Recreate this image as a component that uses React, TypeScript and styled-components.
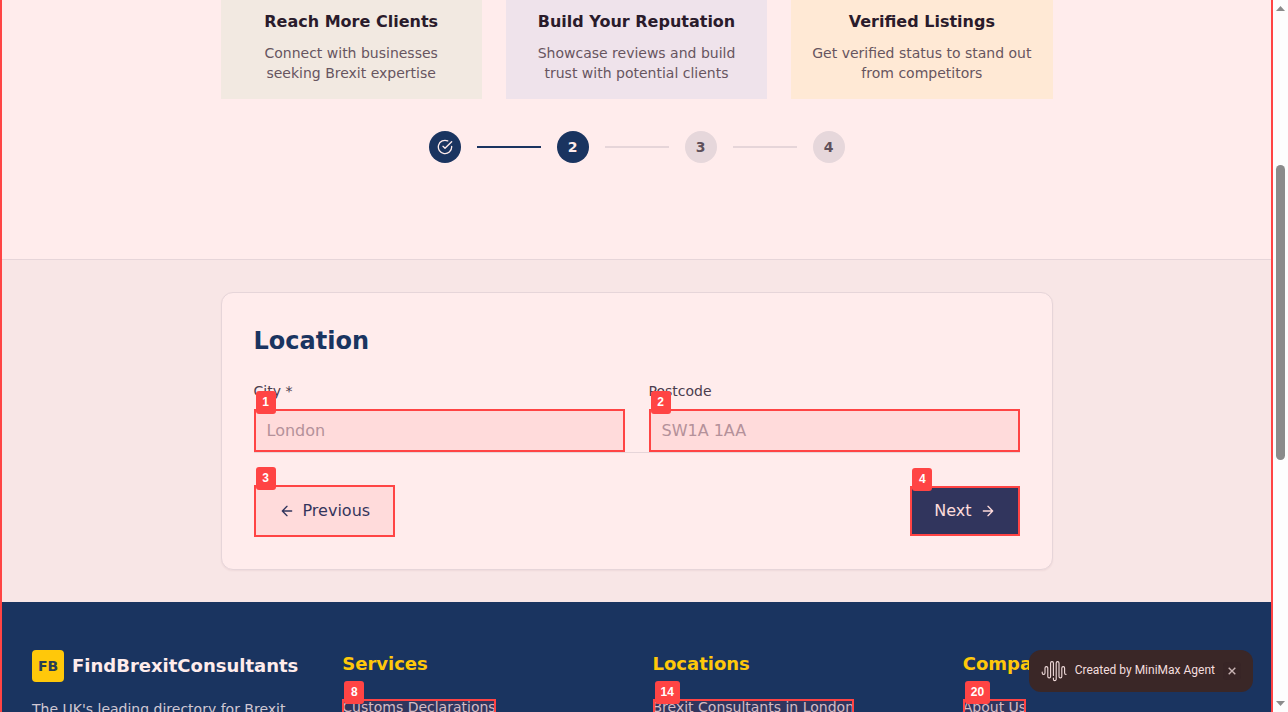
import React, { useState } from "react";
import styled, { createGlobalStyle, css } from "styled-components";

const navy = "#1a3460";
const gold = "#ffc80a";
const alert = "#ff4444";
const line = "#e6d5d9";
const surface = "#ffecec";

const GlobalStyle = createGlobalStyle`
  *, *::before, *::after { box-sizing: border-box; }
  body {
    margin: 0;
    background: ${surface};
    font-family: "DejaVu Sans", sans-serif;
    font-size: 16px;
  }
  h2, h3, p, ul { margin: 0; padding: 0; }
  button, input { font-family: inherit; }
`;

const Window = styled.div`
  display: flex;
  height: 100vh;
  overflow: hidden;
`;

const Page = styled.div`
  position: relative;
  flex: 1;
  min-width: 0;
  overflow: hidden;
  display: flex;
  flex-direction: column;

  &::after {
    content: "";
    position: absolute;
    inset: 0;
    border: solid ${alert};
    border-width: 0 2px;
    pointer-events: none;
  }
`;

const Hero = styled.section`
  flex-shrink: 0;
  padding: 0 32px 96px;
  background: ${surface};
  border-bottom: 1px solid ${line};
`;

const Container = styled.div`
  max-width: 832px;
  margin: 0 auto;
`;

const Benefits = styled.div`
  display: grid;
  grid-template-columns: repeat(3, 1fr);
  gap: 24px;
`;

const Benefit = styled.article<{ $tone: string }>`
  padding: 9px 16px 16px;
  background: ${(p) => p.$tone};
  text-align: center;
`;

const BenefitTitle = styled.h3`
  margin-bottom: 8px;
  font-size: 16px;
  line-height: 26px;
  color: #2a1b2b;
`;

const BenefitText = styled.p`
  font-size: 14px;
  line-height: 20px;
  color: #67555f;
`;

const Steps = styled.div`
  display: flex;
  justify-content: center;
  align-items: center;
  gap: 16px;
  padding-top: 32px;
`;

const Step = styled.div<{ $active?: boolean }>`
  display: flex;
  align-items: center;
  justify-content: center;
  width: 32px;
  height: 32px;
  border-radius: 50%;
  font-size: 14px;
  font-weight: 700;
  background: ${(p) => (p.$active ? navy : "#e6d7db")};
  color: ${(p) => (p.$active ? surface : "#5f505a")};
`;

const Connector = styled.div<{ $active?: boolean }>`
  width: 64px;
  height: 2px;
  background: ${(p) => (p.$active ? navy : "#e6d5d9")};
`;

const FormSection = styled.section`
  flex-shrink: 0;
  padding: 32px;
  background: #f8e6e6;
`;

const Card = styled.form`
  padding: 32px;
  background: ${surface};
  border: 1px solid ${line};
  border-radius: 12px;
  box-shadow: 0 1px 2px rgba(80, 20, 40, 0.06);
`;

const CardTitle = styled.h2`
  margin-bottom: 24px;
  font-size: 24px;
  line-height: 32px;
  color: ${navy};
`;

const Fields = styled.div`
  display: grid;
  grid-template-columns: 1fr 1fr;
  gap: 24px;
  border-bottom: 1px solid ${line};
`;

const Field = styled.div`
  display: flex;
  flex-direction: column;
  gap: 8px;
`;

const Label = styled.label`
  font-size: 14px;
  line-height: 20px;
  color: #4b3d4e;
`;

const Input = styled.input`
  display: block;
  width: 100%;
  height: 43px;
  padding: 0 12px;
  border: 1px solid ${line};
  background: ${surface};
  font-size: 16px;
  color: #2a1b2b;

  &::placeholder {
    color: #ac9aa4;
    opacity: 1;
  }
`;

const marked = css`
  position: relative;

  &::after {
    content: "";
    position: absolute;
    inset: 0;
    border: 2px solid ${alert};
    background: rgba(255, 68, 68, 0.1);
    pointer-events: none;
  }
`;

const Marked = styled.div`
  ${marked}
`;

const MarkedItem = styled.span`
  ${marked}
  display: inline-block;
  line-height: 17px;
`;

const Tag = styled.span`
  position: absolute;
  z-index: 1;
  top: -18px;
  left: 2px;
  min-width: 20px;
  padding: 0 6px;
  border-radius: 3px;
  background: ${alert};
  color: #fff;
  font: 700 12px/23px "Liberation Sans", sans-serif;
  text-align: center;
`;

const Actions = styled.div`
  display: flex;
  justify-content: space-between;
  align-items: center;
  padding-top: 32px;
`;

const Button = styled.button<{ $primary?: boolean }>`
  display: flex;
  align-items: center;
  gap: 8px;
  padding: 12px 24px;
  border: ${(p) => (p.$primary ? "0" : `1px solid ${navy}`)};
  background: ${(p) => (p.$primary ? navy : surface)};
  color: ${(p) => (p.$primary ? surface : navy)};
  font-size: 16px;
  line-height: 26px;
`;

const Footer = styled.footer`
  flex: 1 0 auto;
  padding: 48px 32px;
  display: grid;
  grid-template-columns: repeat(4, 1fr);
  align-items: start;
  gap: 32px;
  background: ${navy};
`;

const Brand = styled.div`
  display: flex;
  align-items: center;
  gap: 8px;
  margin-bottom: 16px;
  font-size: 18px;
  line-height: 28px;
  font-weight: 700;
  color: ${surface};
`;

const BrandMark = styled.span`
  display: flex;
  align-items: center;
  justify-content: center;
  width: 32px;
  height: 32px;
  border-radius: 4px;
  background: ${gold};
  color: #283c54;
  font-size: 14px;
`;

const Blurb = styled.p`
  font-size: 14px;
  line-height: 23px;
  color: #d1c8d3;
`;

const ColumnTitle = styled.h3`
  margin-bottom: 16px;
  font-size: 18px;
  line-height: 28px;
  color: ${gold};
`;

const Links = styled.ul`
  list-style: none;
  padding-top: 3px;
`;

const FooterLink = styled.a`
  display: block;
  font-size: 14px;
  line-height: 17px;
  color: #d1c8d3;
  text-decoration: none;
`;

const Toast = styled.aside`
  position: absolute;
  z-index: 2;
  right: 20px;
  bottom: 20px;
  display: flex;
  align-items: center;
  gap: 8px;
  padding: 0 12px;
  height: 42px;
  border-radius: 12px;
  background: #3a2727;
  color: #f3dede;
  font: 400 12px/16px Roboto, sans-serif;
`;

const ToastText = styled.span`
  padding-bottom: 2px;
`;

const Close = styled.button`
  display: flex;
  align-items: center;
  justify-content: center;
  width: 18px;
  height: 18px;
  padding: 0;
  border: 0;
  border-radius: 4px;
  background: #382526;
  color: #c9b4b4;
`;

const Scrollbar = styled.div`
  display: flex;
  flex-direction: column;
  align-items: center;
  width: 15px;
  padding: 6px 0;
  background: #fdfdfd;
`;

const Thumb = styled.div`
  flex: 295;
  width: 9px;
  border-radius: 5px;
  background: #8b8b8b;
`;

const Track = styled.div<{ $share: number }>`
  flex: ${(p) => p.$share};
`;

const Arrow = ({ back }: { back?: boolean }) => (
  <svg width="16" height="16" viewBox="0 0 24 24" fill="none" stroke="currentColor" strokeWidth="2" strokeLinecap="round" strokeLinejoin="round" aria-hidden="true">
    {back ? <path d="m12 19-7-7 7-7M19 12H5" /> : <path d="M5 12h14M12 5l7 7-7 7" />}
  </svg>
);

const CheckCircle = () => (
  <svg width="16" height="16" viewBox="0 0 24 24" fill="none" stroke="currentColor" strokeWidth="2" strokeLinecap="round" strokeLinejoin="round" aria-label="Done">
    <path d="M22 11.08V12a10 10 0 1 1-5.93-9.14" />
    <path d="m9 11 3 3L22 4" />
  </svg>
);

const Wave = () => (
  <svg width="26" height="22" viewBox="0 0 26 22" fill="none" stroke="currentColor" strokeWidth="1.1" strokeLinecap="round" strokeLinejoin="round" aria-hidden="true">
    <path d="M1.200 12v1a1.400 1.400 0 0 0 2.800 0V8a1.400 1.400 0 0 1 2.800 0v8.500a1.400 1.400 0 0 0 2.800 0V3a1.400 1.400 0 0 1 2.800 0v12.500" />
    <path d="M12.400 18v1.200a1.400 1.400 0 0 0 2.800 0V3a1.400 1.400 0 0 1 2.800 0v13.500a1.400 1.400 0 0 0 2.800 0V8a1.400 1.400 0 0 1 2.800 0v5a1.400 1.400 0 0 0 1.400 1.400" />
  </svg>
);

const benefits = [
  { title: "Reach More Clients", text: "Connect with businesses seeking Brexit expertise", tone: "#f2e9e1" },
  { title: "Build Your Reputation", text: "Showcase reviews and build trust with potential clients", tone: "#efe3eb" },
  { title: "Verified Listings", text: "Get verified status to stand out from competitors", tone: "#ffe9d5" },
];

const columns = [
  { title: "Services", link: "Customs Declarations", tag: 8 },
  { title: "Locations", link: "Brexit Consultants in London", tag: 14 },
  { title: "Company", link: "About Us", tag: 20 },
];

export default function App() {
  const [toastOpen, setToastOpen] = useState(true);
  return (
    <>
      <GlobalStyle />
      <Window>
        <Page>
          <Hero>
            <Container>
              <Benefits>
                {benefits.map((b) => (
                  <Benefit key={b.title} $tone={b.tone}>
                    <BenefitTitle>{b.title}</BenefitTitle>
                    <BenefitText>{b.text}</BenefitText>
                  </Benefit>
                ))}
              </Benefits>
              <Steps>
                <Step $active><CheckCircle /></Step>
                <Connector $active />
                <Step $active>2</Step>
                <Connector />
                <Step>3</Step>
                <Connector />
                <Step>4</Step>
              </Steps>
            </Container>
          </Hero>
          <FormSection>
            <Container>
              <Card onSubmit={(e) => e.preventDefault()}>
                <CardTitle>Location</CardTitle>
                <Fields>
                  <Field>
                    <Label htmlFor="city">City *</Label>
                    <Marked>
                      <Input id="city" placeholder="London" />
                      <Tag>1</Tag>
                    </Marked>
                  </Field>
                  <Field>
                    <Label htmlFor="postcode">Postcode</Label>
                    <Marked>
                      <Input id="postcode" placeholder="SW1A 1AA" />
                      <Tag>2</Tag>
                    </Marked>
                  </Field>
                </Fields>
                <Actions>
                  <Marked>
                    <Button type="button"><Arrow back />Previous</Button>
                    <Tag>3</Tag>
                  </Marked>
                  <Marked>
                    <Button type="submit" $primary>Next<Arrow /></Button>
                    <Tag>4</Tag>
                  </Marked>
                </Actions>
              </Card>
            </Container>
          </FormSection>
          <Footer>
            <div>
              <Brand><BrandMark>FB</BrandMark>FindBrexitConsultants</Brand>
              <Blurb>The UK's leading directory for Brexit</Blurb>
            </div>
            {columns.map((c) => (
              <div key={c.title}>
                <ColumnTitle>{c.title}</ColumnTitle>
                <Links>
                  <li>
                    <MarkedItem>
                      <FooterLink href="#">{c.link}</FooterLink>
                      <Tag>{c.tag}</Tag>
                    </MarkedItem>
                  </li>
                </Links>
              </div>
            ))}
          </Footer>
          {toastOpen && (
            <Toast>
              <Wave />
              <ToastText>Created by MiniMax Agent</ToastText>
              <Close type="button" aria-label="Close" onClick={() => setToastOpen(false)}>
                <svg width="8" height="8" viewBox="0 0 8 8" stroke="currentColor" strokeWidth="1.4" aria-hidden="true">
                  <path d="M.7.7l6.600 6.600M7.300.7L.7 7.300" />
                </svg>
              </Close>
            </Toast>
          )}
        </Page>
        <Scrollbar aria-hidden="true">
          <svg width="9" height="5" viewBox="0 0 9 5"><path d="M0 5L4.500 0 9 5z" fill="#8b8b8b" /></svg>
          <Track $share={154} />
          <Thumb />
          <Track $share={241} />
          <svg width="9" height="5" viewBox="0 0 9 5"><path d="M0 0h9L4.500 5z" fill="#8b8b8b" /></svg>
        </Scrollbar>
      </Window>
    </>
  );
}
